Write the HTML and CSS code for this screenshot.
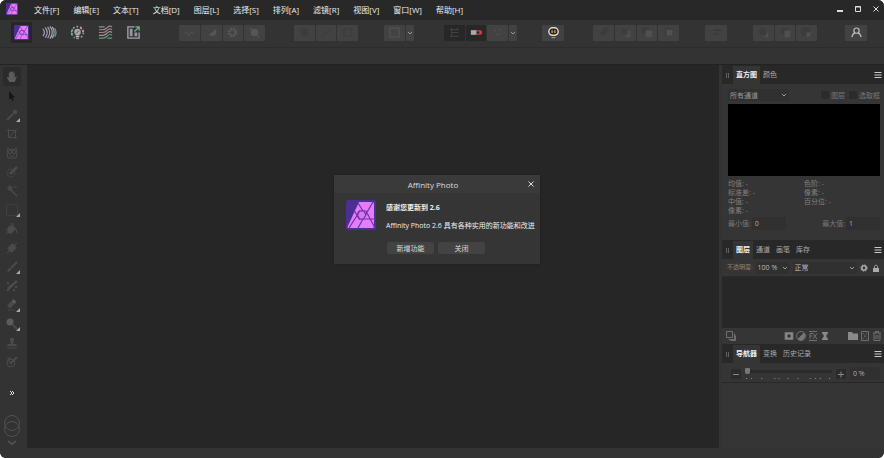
FILE: index.html
```html
<!DOCTYPE html>
<html lang="zh-CN">
<head>
<meta charset="utf-8">
<title>Affinity Photo</title>
<link rel="stylesheet" href="styles.css">
</head>
<body>
<svg class="defs" aria-hidden="true">
  <symbol id="logo" viewBox="0 0 30 30">
    <rect width="30" height="30" rx="2.500" fill="#4c2f92"/>
    <path d="M13 2h13.500q1.500 0 1.500 1.500v23q0 1.500-1.500 1.500H2.500q-1.500 0-.8-1.500z" fill="#e67cf8"/>
    <path d="M12 3l7.500 12M27 2L17 19 12 28M13 11h7l9 17M29 19H13l-5-9M13 19l-2-4 2-4M3 28l9-14" fill="none" stroke="#6a35a8" stroke-width="1.200"/>
    <path d="M13.500 11h4.500l2 4-2.500 4h-4l-2-4z" fill="#dd74f2" stroke="#6a35a8" stroke-width="1.200"/>
  </symbol>
  <symbol id="chevron" viewBox="0 0 6 6"><path d="M1 2l2 2 2-2" fill="none" stroke="currentColor"/></symbol>
  <symbol id="burger" viewBox="0 0 8 8"><path d="M.5 1.500h7M.5 4h7M.5 6.500h7" stroke="currentColor" fill="none"/></symbol>
</svg>
<div class="app">
  <header class="titlebar">
    <svg class="app-logo"><use href="#logo"/></svg>
    <nav class="menu">
      <button>文件[F]</button><button>编辑[E]</button><button>文本[T]</button><button>文档[D]</button><button>图层[L]</button><button>选择[S]</button><button>排列[A]</button><button>滤镜[R]</button><button>视图[V]</button><button>窗口[W]</button><button>帮助[H]</button>
    </nav>
    <div class="window-controls">
      <button aria-label="最小化"><svg viewBox="0 0 8 8"><path d="M1 6h6" stroke="#ddd" stroke-width="2"/></svg></button>
      <button aria-label="最大化"><svg viewBox="0 0 8 8"><path d="M1.500 1.500h5v5h-5zM1 2h6" fill="none" stroke="#ddd"/></svg></button>
      <button aria-label="关闭窗口"><svg viewBox="0 0 8 8"><path d="M1.500 1.500l5 5m0-5l-5 5" stroke="#ddd"/></svg></button>
    </div>
  </header>

  <div class="toolbar">
    <div class="personas">
      <button class="current" aria-label="照片"><svg viewBox="0 0 16 16"><use href="#logo"/></svg></button>
      <button aria-label="液化"><svg viewBox="0 0 16 16" fill="none" stroke-width="1.300"><path d="M1 4q3 4 0 8" stroke="#a88fc0"/><path d="M3.500 2.500q4 5.500 0 11M6 2q4.500 6 0 12" stroke="#a59bac"/><path d="M8.500 1.500q5 6.500 0 13M11 2q4 6 0 12" stroke="#a5abaf"/><path d="M13.500 3.500q3 4.500 0 9" stroke="#6f95ac"/></svg></button>
      <button aria-label="显影"><svg viewBox="0 0 16 16" fill="none"><circle cx="8" cy="8" r="6.300" stroke="#949a97" stroke-width="1.800" stroke-dasharray="2 1.960"/><path d="M2 10A6.300 6.300 0 0 1 3 4.500" stroke="#75b693" stroke-width="1.800" stroke-dasharray="2 1.500"/><path d="M11 3a6.300 6.300 0 0 1 3 5" stroke="#d58b91" stroke-width="1.800" stroke-dasharray="2 1.500"/><circle cx="8" cy="7.500" r="3.500" fill="#a9a9a9"/><path d="M5 12h6v3H5z" fill="#333"/><path d="M6 12h4M6.500 14h3" stroke="#b4b4b4" stroke-width="1.500"/><path d="M6.500 9l3-3" stroke="#444"/></svg></button>
      <button aria-label="色调映射"><svg viewBox="0 0 16 16" fill="none" stroke-width="1.200"><path d="M1 2h6M1 5h4q3 0 5-2.500T15 2" stroke="#929292"/><path d="M1 8h4q3 0 5-2.500T15 5" stroke="#b07c82"/><path d="M1 11h4q3 0 5-2.500T15 8" stroke="#999"/><path d="M1 14h4q3 0 5-2.500T15 11M10 14h5" stroke="#659680"/></svg></button>
      <button aria-label="导出"><svg viewBox="0 0 16 16" fill="none"><path d="M9 2H2v12h12V8" stroke="#a5a2ba" stroke-width="1.400"/><path d="M4 4h3v8H4zM9 8h3v4H9z" fill="#999"/><path d="M9 7l5-5m-4 0h4v4" stroke="#66b78f" stroke-width="1.400"/></svg></button>
    </div>
    <div class="group four after-personas">
      <button aria-label="自动色阶"><svg viewBox="0 0 16 16"><path d="M3 9q2-3 3 0t3 0 4 0"/></svg></button>
      <button aria-label="自动对比度"><svg viewBox="0 0 16 16"><path class="fill" d="M13 4v5q-2 4-8 2z"/></svg></button>
      <button aria-label="自动颜色"><svg viewBox="0 0 16 16"><circle cx="8" cy="8" r="3.500" stroke-width="3.500" stroke-dasharray="2 .750"/></svg></button>
      <button aria-label="自动白平衡"><svg viewBox="0 0 16 16"><circle class="fill" cx="8" cy="8" r="4"/><path d="M3 3l10 10M3 4h2m6 9h2"/></svg></button>
    </div>
    <div class="group three after-auto dark-icons">
      <button aria-label="全选"><svg viewBox="0 0 16 16"><rect class="fill" x="4" y="4" width="8" height="8"/></svg></button>
      <button aria-label="取消选择"><svg viewBox="0 0 16 16"><path d="M3 13L13 3"/></svg></button>
      <button aria-label="反选"><svg viewBox="0 0 16 16"><path d="M4 4h8v8H4z" stroke-dasharray="2 1"/></svg></button>
    </div>
    <div class="group one-drop after-select">
      <button aria-label="快速蒙版"><svg viewBox="0 0 16 16"><path d="M3 3h10v10H3z"/><path d="M5 5h6v6H5z" opacity=".3"/></svg></button>
      <button class="drop" aria-label="蒙版选项"><svg viewBox="0 0 6 6"><use href="#chevron"/></svg></button>
    </div>
    <div class="group snap after-mask">
      <button class="pressed" aria-label="对齐网格"><svg viewBox="0 0 16 16"><path d="M5 3v10M3 5h10M5 8h7M3 12h10M11 3v2"/></svg></button>
      <button class="pressed" aria-label="吸附"><svg viewBox="0 0 16 16"><path d="M2 5.500h6v5H2z" fill="#aaa" stroke="none"/><path d="M8 5.500h4q2 0 2 2.500t-2 2.500H8V9h3V7H8z" fill="#e03548" stroke="none"/></svg></button>
      <button aria-label="像素对齐"><svg viewBox="0 0 16 16"><path d="M4 6h2m4-1h2M6 9l2 2 2-2"/></svg></button>
      <button class="drop" aria-label="吸附选项"><svg viewBox="0 0 6 6"><use href="#chevron"/></svg></button>
    </div>
    <div class="group after-snap">
      <button aria-label="助手"><svg viewBox="0 0 16 16"><rect x="3" y="3" width="10" height="8" rx="4" stroke="#ddd" stroke-width="1.500" fill="#28231b"/><path d="M6.500 5.500v3m3-3v3" stroke="#d9a64d" stroke-width="1.400"/><path d="M6 13.500h4" stroke="#aaa"/></svg></button>
    </div>
    <div class="group four after-assist dark-icons">
      <button aria-label="移到最后"><svg viewBox="0 0 16 16"><path class="fill" d="M9 3h4v4l-4 4H5V8z"/></svg></button>
      <button aria-label="后移"><svg viewBox="0 0 16 16"><path class="fill" d="M4 4h5v5H4z"/><path class="soft" d="M8 11h3V6h2v7H8z"/></svg></button>
      <button aria-label="前移"><svg viewBox="0 0 16 16"><path class="fill" d="M3 2h7v3H7v4H3z"/><path class="soft" d="M7 6h7v7H7z"/></svg></button>
      <button aria-label="移到最前"><svg viewBox="0 0 16 16"><path class="fill" d="M4 3h8v2H6v6H4z"/><path class="soft" d="M6 5h6v6H6z"/></svg></button>
    </div>
    <div class="group after-order dark-icons">
      <button aria-label="对齐"><svg viewBox="0 0 16 16"><path d="M5 5.500h8M5 9.500h5" stroke-width="2"/></svg></button>
    </div>
    <div class="group three after-align dark-icons">
      <button aria-label="相加"><svg viewBox="0 0 16 16"><circle class="fill" cx="7" cy="7" r="4"/><path class="soft" d="M13 6v7H7q5-1 6-7z"/></svg></button>
      <button aria-label="相减"><svg viewBox="0 0 16 16"><circle class="fill" cx="7" cy="7" r="4"/><path class="soft" d="M7 6h6v7H7z"/></svg></button>
      <button aria-label="相交"><svg viewBox="0 0 16 16"><circle class="fill" cx="7" cy="7" r="5"/><path class="soft" d="M8 8h5q0 4-5 5z"/></svg></button>
    </div>
    <div class="group account">
      <button aria-label="账户"><svg viewBox="0 0 16 16"><circle cx="8" cy="6" r="2.800" stroke="#bbb" stroke-width="1.300"/><path d="M3 13q1-4 3.500-4.500M13 13q-1-4-3.500-4.500" stroke="#bbb" stroke-width="1.300"/></svg></button>
    </div>
  </div>
  <div class="context-bar"></div>

  <div class="workspace">
    <aside class="tools">
      <button class="current" aria-label="抓手"><svg viewBox="0 0 12 12"><path class="fill bright" d="M3.500 11L.8 6.500q.8-1 2 .6V2q.8-1 1.300 0v3V1q.8-1 1.400 0v4V.8q.9-1 1.500 0V5l.4-3.500q1-.8 1.300.3V7l1-1.500q1.200-.3 1 .5L8.800 11z"/></svg></button>
      <button aria-label="移动"><svg viewBox="0 0 12 12"><path d="M3 1v9l2-2 1.500 3 1.300-.6L6.500 7.500H9z" fill="#161616" stroke="none"/></svg></button>
      <button class="more" aria-label="取色器"><svg viewBox="0 0 12 12"><path d="M1 11l6-6" stroke-width="2"/><circle class="fill" cx="9" cy="3" r="2.300"/></svg></button>
      <button aria-label="裁剪"><svg viewBox="0 0 12 12"><path d="M2.500 1v8.500H11M1 2.500h8.500V11M3 9l8-8"/></svg></button>
      <button aria-label="选择画笔"><svg viewBox="0 0 12 12"><path d="M2 1l2 1.500h4L10 1l1 5-1 5H2L1 6z"/><circle cx="4" cy="5" r="1.800"/><circle cx="8" cy="5" r="1.800"/><path d="M4 9h4"/></svg></button>
      <button aria-label="选区画笔"><svg viewBox="0 0 12 12"><circle cx="5" cy="7" r="4" stroke-dasharray="2 1"/><path d="M4 8l7-7" stroke-width="2.500"/></svg></button>
      <button aria-label="魔棒"><svg viewBox="0 0 12 12"><path d="M4 4l7 7" stroke-width="1.500"/><path d="M1 3h6M4 0v6M2 1l4 4M6 1L2 5M8 2h3"/></svg></button>
      <button class="more" aria-label="矩形选框"><svg viewBox="0 0 12 12"><path d="M.5.5h11v11H.5z" stroke-dasharray="1 1"/></svg></button>
      <button aria-label="填充"><svg viewBox="0 0 12 12"><path class="fill" d="M2 4l5-2 3 4-5 5-3-1z"/><path d="M5 5V1q2-2 3 1M10 6l1 4M1 5v6"/></svg></button>
      <button aria-label="修复"><svg viewBox="0 0 12 12"><path d="M2 7l5-5m-4 7l6-6m-4 7l5-5" stroke-width="2"/><path d="M1 11l10-10"/></svg></button>
      <button class="more" aria-label="画笔"><svg viewBox="0 0 12 12"><path d="M5 7l6-6" stroke-width="2"/><path class="fill" d="M1 11l2-4 2 .5V9q-1 1.500-4 2z"/></svg></button>
      <button aria-label="像素画笔"><svg viewBox="0 0 12 12"><path d="M2 9l9-8" stroke-width="2.500"/><path d="M1 3h2m0 3h2M1 10h2m4 0h2m0-3h2" stroke-width="2"/></svg></button>
      <button class="more" aria-label="橡皮擦"><svg viewBox="0 0 12 12"><path d="M2.500 8L7 3.500" stroke-width="4"/><path class="bright" d="M7 3.500L9 1.500" stroke-width="4"/><path d="M2 11h7" stroke-dasharray="2 1"/></svg></button>
      <button class="more" aria-label="减淡"><svg viewBox="0 0 12 12"><circle class="fill bright" cx="4" cy="4" r="3.500"/><path d="M6 6l5 5" stroke-width="2"/></svg></button>
      <button aria-label="仿制"><svg viewBox="0 0 12 12"><path class="fill" d="M4 1h4v2L7 7h3l1 2H1l1-2h3L4 3z"/><path d="M1 11h10"/></svg></button>
      <button aria-label="修补"><svg viewBox="0 0 12 12"><circle cx="5" cy="7" r="4"/><path d="M4 8l7-7" stroke-width="2"/><path d="M1 2h4M2 3l3 5"/></svg></button>
      <button class="expand" aria-label="更多工具"><svg viewBox="0 0 12 12"><path d="M4 4l2 2-2 2m2-4l2 2-2 2" stroke="#ddd"/></svg></button>
      <button class="swatches" aria-label="颜色"><svg viewBox="0 0 18 32"><circle cx="9" cy="9" r="7.500"/><circle cx="9" cy="15" r="7.500"/><path d="M5 27l4 3 4-3" stroke-width="2"/></svg></button>
    </aside>

    <main class="canvas">
      <section class="dialog" role="dialog" aria-labelledby="dialog-title">
        <header><h1 id="dialog-title">Affinity Photo</h1><button class="close" aria-label="关闭对话框"><svg viewBox="0 0 8 8"><path d="M1.500 1.500l5 5m0-5l-5 5" stroke="#ddd"/></svg></button></header>
        <div class="dialog-body">
          <svg class="dialog-logo"><use href="#logo"/></svg>
          <div>
            <h2>感谢您更新到 2.6</h2>
            <p>Affinity Photo 2.6 具有各种实用的新功能和改进</p>
            <div class="actions"><button>新增功能</button><button>关闭</button></div>
          </div>
        </div>
      </section>
    </main>

    <aside class="panels">
      <section class="panel histogram">
        <div class="tabs"><span class="grip"></span><button class="active">直方图</button><button>颜色</button><button class="burger" aria-label="面板菜单"><svg><use href="#burger"/></svg></button></div>
        <div class="panel-body">
          <div class="channels">
            <span class="select channel"><select aria-label="通道"><option>所有通道</option></select><svg><use href="#chevron"/></svg></span>
            <label class="check"><input type="checkbox">图层</label>
            <label class="check"><input type="checkbox">选取框</label>
          </div>
          <div class="graph"></div>
          <div class="stats">
            <div>均值: -<br>标准差: -<br>中值: -<br>像素: -</div>
            <div>色阶: -<br>像素: -<br>百分位: -</div>
          </div>
          <div class="range-fields">
            <label>最小值:<input type="text" value="0"></label>
            <label>最大值:<input type="text" value="1"></label>
          </div>
        </div>
      </section>
      <section class="panel layers">
        <div class="tabs"><span class="grip"></span><button class="active">图层</button><button>通道</button><button>画笔</button><button>库存</button><button class="burger" aria-label="面板菜单"><svg><use href="#burger"/></svg></button></div>
        <div class="blend">
          <label for="opacity">不透明度:</label>
          <span class="select opacity"><select id="opacity"><option>100 %</option></select><svg><use href="#chevron"/></svg></span>
          <span class="select mode"><select aria-label="混合模式"><option>正常</option></select><svg><use href="#chevron"/></svg></span>
          <button aria-label="混合选项"><svg viewBox="0 0 8 8"><circle cx="4" cy="4" r="2.200" fill="none" stroke="#aaa" stroke-width="1.600"/><circle cx="4" cy="4" r="3.200" fill="none" stroke="#aaa" stroke-dasharray="1.200 1.310"/></svg></button>
          <button class="lock" aria-label="锁定"><svg viewBox="0 0 8 8"><path d="M1 4h6v4H1z" fill="#aaa"/><path d="M2.500 4V2q1.500-2 3 0v2" fill="none" stroke="#999"/></svg></button>
        </div>
        <div class="layer-list"></div>
        <div class="layer-actions">
          <button class="first" aria-label="编辑所有图层"><svg viewBox="0 0 10 10"><path d="M.5.5h6v6h-6zM2.500 8.500h6v-6M4.500 9.500h5v-5"/></svg></button>
          <button aria-label="蒙版"><svg viewBox="0 0 10 10"><path d="M1 1.500h8v7H1z" fill="#8b8b8b"/><circle cx="5" cy="5" r="2" fill="#303030"/></svg></button>
          <button aria-label="调整"><svg viewBox="0 0 10 10"><circle cx="5" cy="5" r="4.500"/><path d="M8 2L2 8q4 3 6-1t0-5" fill="#777"/></svg></button>
          <button aria-label="图层效果"><svg viewBox="0 0 10 10"><path d="M1 .5h8M1 9.500h8M2 8V2.500h3M2 5h2.500M5 2.500L9 8M9 2.500L5 8"/></svg></button>
          <button aria-label="实时滤镜"><svg viewBox="0 0 10 10"><path d="M2 1h6v1L6 5l2 3v1H2V8l2-3-2-3z" fill="#888" stroke="none"/></svg></button>
          <button class="folder" aria-label="新建组"><svg viewBox="0 0 10 10"><path d="M0 1h4l1 1.500h5V9H0z" fill="#8a8a8a" stroke="none"/></svg></button>
          <button aria-label="新建像素图层"><svg viewBox="0 0 10 10"><path d="M1.500.5h7v9h-7z"/><path d="M3 2l4 6m0-6L3 8" stroke-dasharray="1 1"/></svg></button>
          <button aria-label="删除"><svg viewBox="0 0 10 10"><path d="M1 2h8M3.500 2V.5h3V2M2 2v7.500h6V2M4 4v4m2-4v4"/></svg></button>
        </div>
      </section>
      <section class="panel navigator">
        <div class="tabs"><span class="grip"></span><button class="active">导航器</button><button>变换</button><button>历史记录</button><button class="burger" aria-label="面板菜单"><svg><use href="#burger"/></svg></button></div>
        <div class="zoom">
          <button aria-label="缩小"><svg viewBox="0 0 10 10"><path d="M2 5.500h6"/></svg></button>
          <div class="slider"><input type="range" min="0" max="100" value="0" aria-label="缩放"><svg viewBox="0 0 86 2" preserveAspectRatio="none"><path d="M1 1h1m4 0h1m9 0h1m12 0h1m3 0h1m8 0h1m9 0h1m11 0h1m4 0h1m4 0h1m8 0h1" stroke="#888" stroke-width="2"/></svg></div>
          <button aria-label="放大"><svg viewBox="0 0 10 10"><path d="M2 5.500h6M5 2.500v6"/></svg></button>
          <input class="percent" type="text" value="0 %" aria-label="缩放比例">
        </div>
      </section>
    </aside>
  </div>
  <footer class="status"></footer>
</div>
</body>
</html>
```
FILE: styles.css
```css
* { box-sizing: border-box; }
html { background: #fff; }
body { margin: 0; font: 7px/9px "Open Sans", "Noto Sans CJK SC", sans-serif; color: #999; }
button, input, select { font: inherit; color: inherit; border: 0; padding: 0; margin: 0; background: none; min-width: 0; }
button { display: flex; align-items: center; justify-content: center; white-space: nowrap; }
svg { display: block; flex: none; }
.defs { position: absolute; width: 0; height: 0; }

.app { height: 100vh; display: flex; flex-direction: column; background: #333; border-radius: 6px; overflow: hidden; }

.titlebar { height: 20px; flex: none; display: flex; align-items: center; padding: 0 4px 0 6px; background: #282828; }
.app-logo { width: 12px; height: 12px; margin-bottom: 2px; }
.menu { display: flex; gap: 14px; margin-left: 16px; font-size: 8px; line-height: 12px; color: #eee; }
.window-controls { display: flex; gap: 10px; margin-left: auto; padding-bottom: 2px; }
.window-controls svg, .close svg { width: 8px; height: 8px; }

.toolbar { height: 28px; flex: none; display: flex; align-items: center; padding: 0 17px 2px 11px; border-bottom: 1px solid #2c2c2c; }
.personas { display: flex; gap: 7px; }
.personas button { width: 21px; height: 21px; }
.personas .current { background: #262626; border-radius: 2px; }
.personas svg { width: 15px; height: 15px; }
.group { display: flex; gap: 1px; width: 22px; height: 16px; color: #999; }
.group button { flex: 1; background: #424242; border-radius: 1px; }
.group svg { width: 15px; height: 15px; fill: none; stroke: #565656; }
.group .fill { fill: #565656; stroke: none; }
.group .soft { fill: #505050; stroke: none; }
.group.dark-icons svg { stroke: #3a3a3a; }
.group.dark-icons .fill { fill: #3c3c3c; }
.group .pressed { background: #272727; }
.group .pressed svg { stroke: #444; }
.group .drop { flex: 0 0 8px; }
.group .drop svg { width: 6px; height: 6px; }
.group.four { width: 86px; }
.group.three { width: 64px; }
.group.one-drop { width: 30px; }
.group.snap { width: 73px; }
.after-personas { margin-left: 35px; }
.after-auto { margin-left: 29px; }
.after-select { margin-left: 26px; }
.after-mask { margin-left: 30px; }
.after-snap { margin-left: 25px; }
.after-assist { margin-left: 29px; }
.after-order, .after-align { margin-left: 26px; }
.account { margin-left: auto; }
.context-bar { height: 17px; flex: none; border-bottom: 1px solid #222; }

.workspace { flex: 1; min-height: 0; display: flex; }
.tools { width: 27px; flex: none; display: flex; flex-direction: column; padding: 2px 6px 0 3px; }
.tools button { height: 19px; flex: none; border-radius: 2px; position: relative; }
.tools .current { background: #2b2b2b; }
.tools svg { width: 12px; height: 12px; fill: none; stroke: #4b4b4b; }
.tools .fill { fill: #4b4b4b; stroke: none; }
.tools .bright { stroke: #5c5c5c; }
.tools .fill.bright { fill: #5c5c5c; stroke: none; }
.tools .more::after { content: ""; position: absolute; right: 1px; bottom: 2px; border: 2px solid; border-color: transparent #aaa #aaa transparent; }
.tools .expand { margin-top: 12px; }
.tools .swatches { height: 34px; margin-top: auto; margin-bottom: 1px; }
.tools .swatches svg { width: 18px; height: 32px; stroke: #505050; }

.canvas { flex: 1; min-width: 0; background: #262626; display: flex; align-items: center; justify-content: center; padding: 0 0 74px 128px; }
.dialog { width: 206px; background: #353535; box-shadow: 0 0 2px #1c1c1c; color: #ddd; }
.dialog header { height: 18px; display: grid; grid-template-columns: 10px 1fr 18px; align-items: center; background: #3a3a3a; }
.dialog h1 { grid-column: 2; margin: 0; font-size: 8px; font-weight: 400; text-align: center; }
.dialog h2 { margin: 0 0 8px; font-size: 7px; line-height: 10px; color: #eee; }
.dialog p { margin: 0; white-space: nowrap; color: #eee; }
.dialog-body { display: flex; gap: 10px; height: 71px; padding: 10px 0 0 12px; }
.dialog-logo { width: 30px; height: 30px; margin-top: -3px; }
.actions { display: flex; gap: 4px; margin: 12px 0 0 1px; }
.actions button { width: 47px; height: 12px; background: #434343; border-radius: 2px; }

.panels { width: 165px; flex: none; border-left: 3px solid #333; background: #353535; display: flex; flex-direction: column; }
.tabs { height: 19px; display: flex; align-items: stretch; padding: 1px 2px 0 4px; background: #282828; color: #aaa; }
.tabs button { padding: 0 3px 2px; }
.tabs .active { background: #353535; color: #eee; font-weight: 600; }
.tabs .burger { margin-left: auto; padding: 0 0 1px; }
.burger svg { width: 8px; height: 8px; color: #ccc; }
.grip { width: 3px; height: 5px; margin: auto 4px auto 0; border: solid #606060; border-width: 0 1px; }
.panel-body { padding: 5px 4px 0 6px; }
.channels { display: flex; align-items: center; gap: 4px; height: 12px; margin-bottom: 3px; }
.select { display: grid; align-items: center; height: 12px; background: #303030; border-radius: 2px; }
.select select { grid-area: 1 / 1; appearance: none; width: 100%; height: 12px; padding-left: 2px; outline: 0; }
.select svg { grid-area: 1 / 1; justify-self: end; width: 6px; height: 6px; margin-right: 2px; color: #999; pointer-events: none; }
.channel { width: 61px; margin-right: auto; }
.check { display: flex; align-items: center; gap: 2px; color: #777; }
.check input { appearance: none; width: 8px; height: 8px; border-radius: 1px; background: #2b2b2b; }
.graph { height: 72px; background: #000; }
.stats { display: grid; grid-template-columns: 1fr 1fr; margin: 3px 0 2px; color: #808080; }
.range-fields { display: flex; justify-content: space-between; color: #777; }
.range-fields label { display: flex; align-items: center; gap: 1px; }
.range-fields input, .percent { width: 34px; height: 13px; padding-left: 3px; background: #303030; border-radius: 2px; color: #aaa; }
.histogram { height: 175px; flex: none; }

.blend { height: 18px; display: flex; align-items: center; gap: 3px; padding: 0 4px 0 5px; border-bottom: 1px solid #2b2b2b; }
.blend label { font-size: 6px; color: #8b8379; }
.opacity { width: 34px; color: #bbb; }
.mode { width: 64px; color: #bbb; }
.blend button svg { width: 8px; height: 8px; }
.blend .lock { margin-left: auto; }
.layer-list { height: 51px; background: #272727; }
.layer-actions { height: 16px; display: flex; align-items: center; gap: 2px; padding: 0 2px 0 4px; }
.layer-actions svg { width: 10px; height: 10px; fill: none; stroke: #707070; }
.layer-actions .first { margin-right: auto; }
.layer-actions .folder { margin-left: 16px; }

.zoom { height: 20px; display: flex; align-items: center; padding: 2px 4px 0 9px; gap: 4px; border-bottom: 1px solid #272727; }
.zoom button { width: 10px; height: 10px; background: #2b2b2b; }
.zoom button svg { width: 10px; height: 10px; stroke: #888; fill: none; }
.slider { flex: 1; min-width: 0; }
.slider input { display: block; appearance: none; width: 100%; height: 7px; }
.slider input::-webkit-slider-runnable-track { height: 3px; background: #2a2a2a; border-radius: 1px; }
.slider input::-webkit-slider-thumb { appearance: none; width: 5px; height: 6px; margin-top: -2px; background: #777; border-radius: 1px 1px 2px 2px; }
.slider svg { width: 100%; height: 1px; margin-top: 3px; }
.percent { width: 30px; }
.status { height: 10px; flex: none; background: #333; }
```
